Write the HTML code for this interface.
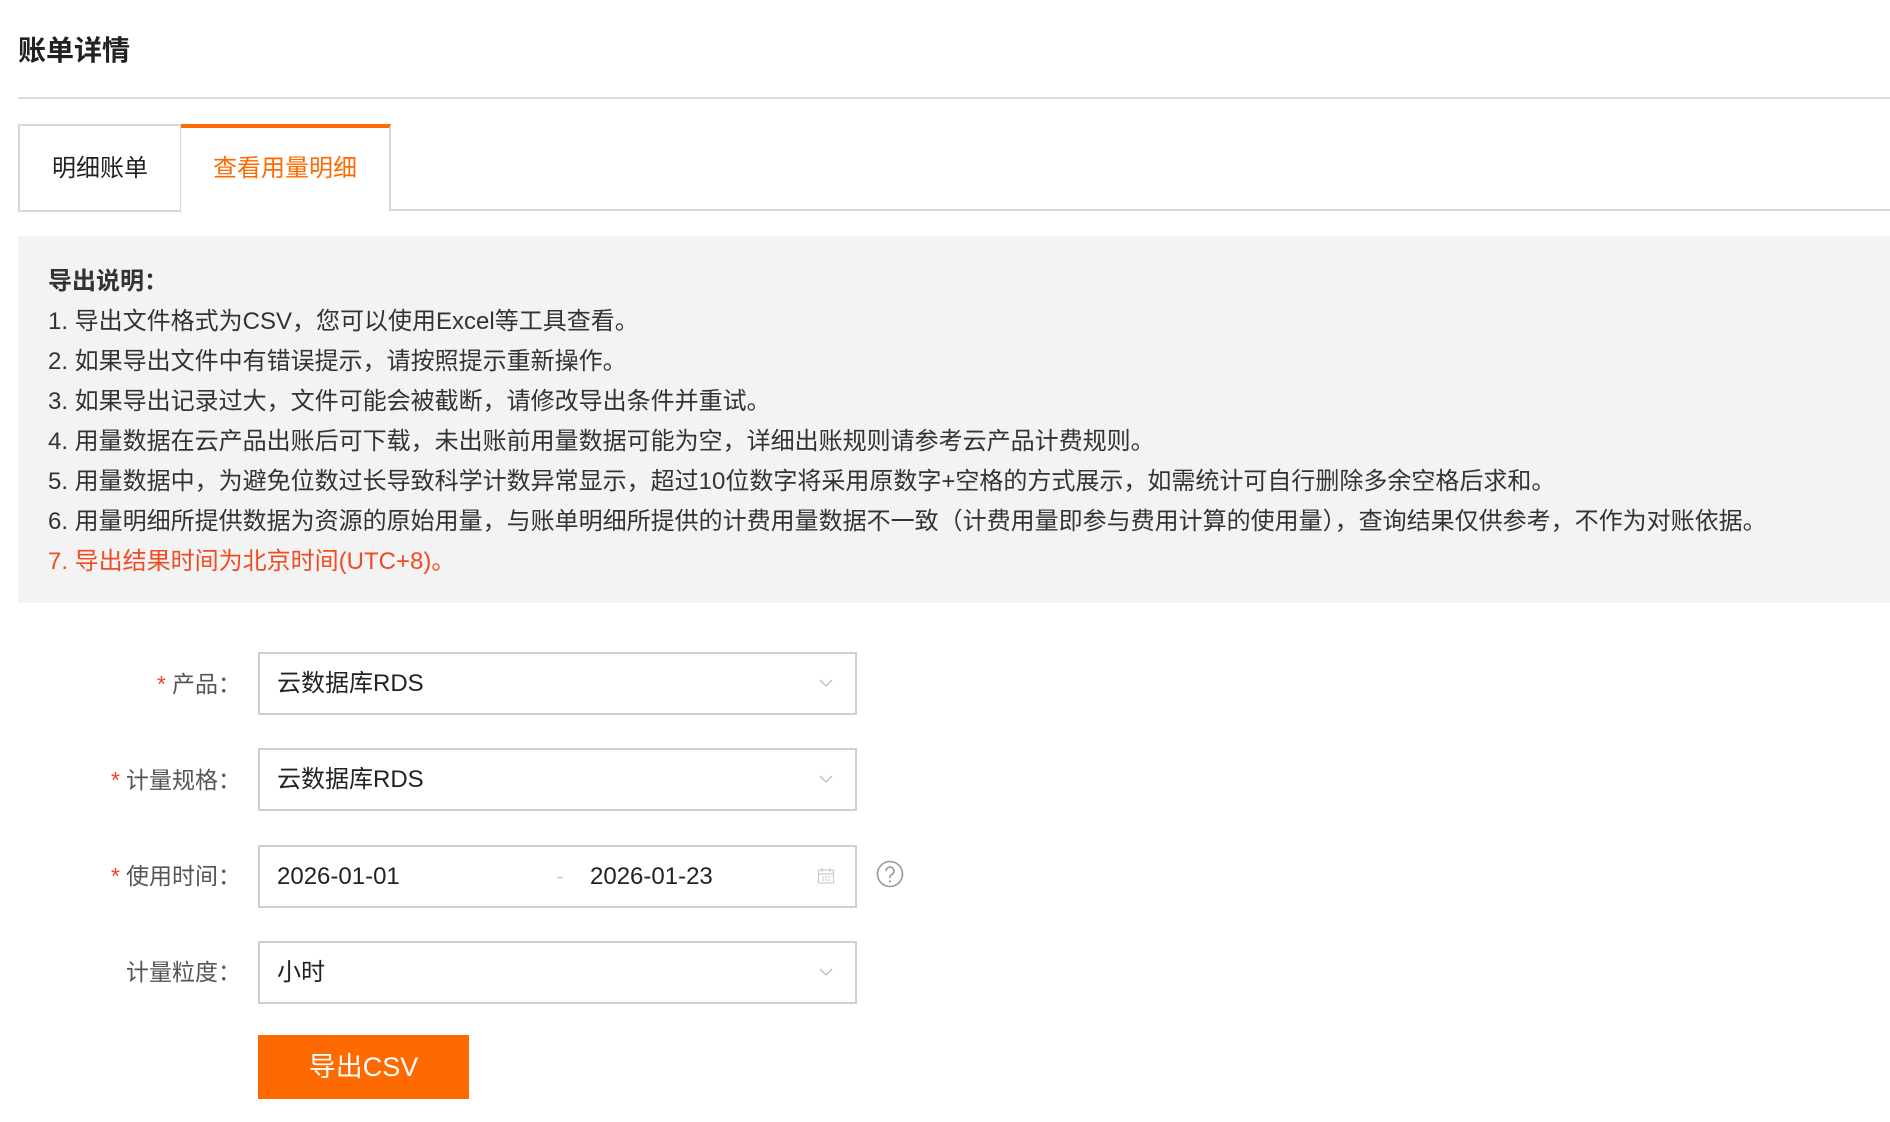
<!DOCTYPE html>
<html><head><meta charset="utf-8"><style>
*{margin:0;padding:0;box-sizing:border-box}
body{width:1890px;height:1122px;background:#fff;font-family:"Liberation Sans","Noto Sans CJK SC",sans-serif;color:#333;position:relative;overflow:hidden}
.abs{position:absolute}
.title{left:18px;top:33px;font-size:28px;font-weight:bold;color:#222;line-height:36px}
.hr{left:18px;right:0;top:97px;height:2px;background:#dcdcdc}
.tab{top:124px;height:88px;font-size:24px;line-height:86px;text-align:center;background:#fff}
.t1{left:18px;width:164px;border:2px solid #d8d8d8;color:#222}
.t2{left:181px;width:210px;border-right:2px solid #d8d8d8;border-top:4px solid #ff6a00;color:#ff6a00;line-height:82px;height:87px}
.tabline{left:390px;right:0;top:209px;height:2px;background:#d8d8d8}
.box{left:18px;right:0;top:236px;height:367px;background:#f3f3f3}
.notes{left:48px;top:262px;font-size:24px;line-height:40px;color:#333;white-space:nowrap}
.notes b{font-weight:bold}
.red{color:#f04b23}
.lbl{width:241px;left:0;text-align:right;font-size:23px;color:#555;line-height:30px}
.lbl i{font-style:normal;color:#f5412c;margin-right:6px}
.inp{left:258px;width:599px;height:63px;border:2px solid #cfcfd6;font-size:24px;line-height:59px;padding-left:17px;color:#222}
.chev{position:absolute;right:22px;top:24px}
.btn{left:258px;top:1035px;width:211px;height:64px;background:#ff6a00;color:#fff;font-size:27px;line-height:64px;text-align:center}
</style></head><body>
<div class="abs title">账单详情</div>
<div class="abs hr"></div>
<div class="abs tab t1">明细账单</div>
<div class="abs tab t2">查看用量明细</div>
<div class="abs tabline"></div>
<div class="abs box"></div>
<div class="abs notes">
<div><b>导出说明：</b></div>
<div>1. 导出文件格式为CSV，您可以使用Excel等工具查看。</div>
<div>2. 如果导出文件中有错误提示，请按照提示重新操作。</div>
<div>3. 如果导出记录过大，文件可能会被截断，请修改导出条件并重试。</div>
<div>4. 用量数据在云产品出账后可下载，未出账前用量数据可能为空，详细出账规则请参考云产品计费规则。</div>
<div>5. 用量数据中，为避免位数过长导致科学计数异常显示，超过10位数字将采用原数字+空格的方式展示，如需统计可自行删除多余空格后求和。</div>
<div>6. 用量明细所提供数据为资源的原始用量，与账单明细所提供的计费用量数据不一致（计费用量即参与费用计算的使用量），查询结果仅供参考，不作为对账依据。</div>
<div class="red">7. 导出结果时间为北京时间(UTC+8)。</div>
</div>

<div class="abs lbl" style="top:669px"><i>*</i>产品：</div>
<div class="abs inp" style="top:652px">云数据库RDS<svg class="chev" width="14" height="10"><path d="M1 2l6 6 6-6" fill="none" stroke="#bbb" stroke-width="1.3"/></svg></div>

<div class="abs lbl" style="top:765px"><i>*</i>计量规格：</div>
<div class="abs inp" style="top:748px">云数据库RDS<svg class="chev" width="14" height="10"><path d="M1 2l6 6 6-6" fill="none" stroke="#bbb" stroke-width="1.3"/></svg></div>

<div class="abs lbl" style="top:861px"><i>*</i>使用时间：</div>
<div class="abs inp" style="top:845px">2026-01-01<span style="position:absolute;left:296px;color:#ccc">-</span><span style="position:absolute;left:330px">2026-01-23</span>
<svg style="position:absolute;right:20px;top:20px" width="18" height="18"><rect x="1.5" y="3" width="15" height="13" fill="none" stroke="#ccc" stroke-width="1.2"/><path d="M1.5 7h15M5 1v4M13 1v4" stroke="#ccc" stroke-width="1.2"/><path d="M5 10h2M8 10h2M11 10h2M5 13h2M8 13h2M11 13h2" stroke="#ccc" stroke-width="1.2"/></svg></div>
<svg class="abs" style="left:876px;top:860px" width="28" height="28"><circle cx="14" cy="14" r="12.5" fill="none" stroke="#999" stroke-width="1.6"/><path d="M10 11a4 4 0 1 1 5.5 3.7c-1 .5-1.5 1.2-1.5 2.3v1" fill="none" stroke="#999" stroke-width="1.6"/><circle cx="14" cy="21.5" r="1.1" fill="#999"/></svg>

<div class="abs lbl" style="top:957px">计量粒度：</div>
<div class="abs inp" style="top:941px">小时<svg class="chev" width="14" height="10"><path d="M1 2l6 6 6-6" fill="none" stroke="#bbb" stroke-width="1.3"/></svg></div>

<div class="abs btn">导出CSV</div>
</body></html>
